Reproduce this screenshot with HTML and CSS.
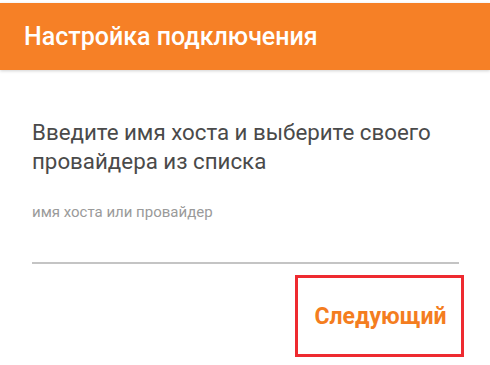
FILE: index.html
```html
<!DOCTYPE html>
<html lang="ru">
<head>
<meta charset="utf-8">
<link rel="stylesheet" href="styles.css">
</head>
<body>
<div class="screen">
  <header class="appbar">
    <h1 class="appbar-title">Настройка подключения</h1>
  </header>
  <main class="content">
    <p class="prompt">Введите имя хоста и выберите своего провайдера из списка</p>
    <label class="field">
      <span class="field-hint">имя хоста или провайдер</span>
      <span class="field-line"></span>
    </label>
    <div class="actions">
      <button class="next-btn" type="button">Следующий</button>
    </div>
  </main>
</div>
</body>
</html>
```

FILE: styles.css
```css
html, body {
  margin: 0;
  padding: 0;
  background: #ffffff;
}
.screen {
  width: 490px;
  height: 365px;
  padding-top: 3px;
  box-sizing: border-box;
  font-family: Roboto, "Noto Sans", sans-serif;
  overflow: hidden;
}
.appbar {
  height: 67px;
  background: #f68026;
  display: flex;
  align-items: center;
  padding-left: 24px;
  box-shadow: 0 1px 3px rgba(0,0,0,0.18);
}
.appbar-title {
  margin: 0;
  color: #ffffff;
  font-size: 25px;
  font-weight: 500;
  letter-spacing: 0;
}
.content {
  padding: 0 26px 0 32px;
}
.prompt {
  margin: 48px 0 0 0;
  font-size: 22.3px;
  line-height: 29px;
  color: #4a4a4a;
  width: 430px;
}
.field {
  display: flex;
  flex-direction: column;
  margin-top: 27px;
}
.field-hint {
  font-size: 15px;
  color: #9a9a9a;
  line-height: 18px;
}
.field-line {
  display: block;
  margin-top: 41px;
  width: 427px;
  height: 2px;
  background: #c4c4c4;
}
.actions {
  display: flex;
  justify-content: flex-end;
  margin-top: 11px;
}
.next-btn {
  width: 169px;
  height: 82px;
  box-sizing: border-box;
  border: 3px solid #ee2a30;
  background: #ffffff;
  color: #f47d20;
  font-family: Roboto, "Noto Sans", sans-serif;
  font-size: 23px;
  font-weight: 700;
  padding: 0 0 0 2px;
}
```
